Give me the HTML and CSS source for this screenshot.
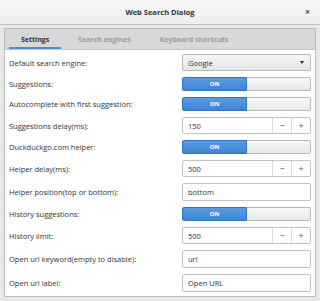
FILE: index.html
```html
<!DOCTYPE html>
<html lang="en">
<head>
  <meta charset="UTF-8">
  <title>Web Search Dialog</title>
  <link rel="stylesheet" href="styles.css">
</head>
<body>
  <div class="window">
    <div class="titlebar">
      <div class="title">Web Search Dialog</div>
      <div class="close">&#x2715;</div>
    </div>
    <div class="window-body">
      <div class="notebook">
        <div class="tabs">
          <div class="tab active">Settings</div>
          <div class="tab">Search engines</div>
          <div class="tab">Keyboard shortcuts</div>
        </div>
        <div class="page">
          <div class="row">
            <div class="label">Default search engine:</div>
            <div class="combo"><span>Google</span><span class="arrow"></span></div>
          </div>
          <div class="row">
            <div class="label">Suggestions:</div>
            <div class="switch"><div class="on">ON</div><div class="off"></div></div>
          </div>
          <div class="row">
            <div class="label">Autocomplete with first suggestion:</div>
            <div class="switch"><div class="on">ON</div><div class="off"></div></div>
          </div>
          <div class="row">
            <div class="label">Suggestions delay(ms):</div>
            <div class="spin"><div class="value">150</div><div class="btn">&minus;</div><div class="btn">+</div></div>
          </div>
          <div class="row">
            <div class="label">Duckduckgo.com helper:</div>
            <div class="switch"><div class="on">ON</div><div class="off"></div></div>
          </div>
          <div class="row">
            <div class="label">Helper delay(ms):</div>
            <div class="spin"><div class="value">500</div><div class="btn">&minus;</div><div class="btn">+</div></div>
          </div>
          <div class="row">
            <div class="label">Helper position(top or bottom):</div>
            <div class="entry">bottom</div>
          </div>
          <div class="row">
            <div class="label">History suggestions:</div>
            <div class="switch"><div class="on">ON</div><div class="off"></div></div>
          </div>
          <div class="row">
            <div class="label">History limit:</div>
            <div class="spin"><div class="value">500</div><div class="btn">&minus;</div><div class="btn">+</div></div>
          </div>
          <div class="row">
            <div class="label">Open url keyword(empty to disable):</div>
            <div class="entry">url</div>
          </div>
          <div class="row">
            <div class="label">Open url label:</div>
            <div class="entry">Open URL</div>
          </div>
        </div>
      </div>
    </div>
  </div>
</body>
</html>
```

FILE: styles.css
```css
body {
  margin: 0;
  font-family: "Open Sans", "Noto Sans", sans-serif;
  font-size: 7.5px;
  color: #2e3436;
  background: #e8e8e8;
}
.window {
  width: 320px;
  height: 301px;
  background: #e8e8e8;
}
.titlebar {
  height: 25px;
  display: flex;
  align-items: center;
  justify-content: center;
  position: relative;
  background: linear-gradient(#f6f6f6, #eeeeee);
  border-bottom: 1px solid #c4c4c4;
  box-sizing: border-box;
}
.title {
  font-weight: bold;
  font-size: 7.5px;
  padding-bottom: 1px;
}
.close {
  position: absolute;
  right: 10px;
  top: 8px;
  font-size: 6px;
  font-weight: bold;
}
.window-body {
  padding: 3px 4px 4px 4px;
}
.notebook {
  border: 1px solid #bcbcbc;
  background: #fff;
}
.tabs {
  display: flex;
  height: 20px;
  background: #d8d8d8;
  border-bottom: 1px solid #c4c4c4;
  padding-left: 4px;
  gap: 5px;
}
.tab {
  padding: 0 12px;
  display: flex;
  align-items: center;
  color: #9a9c9c;
  font-weight: bold;
  font-size: 7px;
  box-sizing: border-box;
}
.tab.active {
  color: #2e3436;
  border-bottom: 2px solid #4a90d9;
  padding-top: 2px;
}
.page {
  display: flex;
  flex-direction: column;
  gap: 6px;
  padding: 4px 4px 4px 4px;
}
.row {
  display: grid;
  grid-template-columns: 1fr 129px;
  align-items: center;
}
.combo {
  height: 17px;
  box-sizing: border-box;
  border: 1px solid #b8b8b8;
  border-radius: 2px;
  background: linear-gradient(#f6f6f6, #e6e6e6);
  display: flex;
  align-items: center;
  justify-content: space-between;
  padding: 0 6px 0 5px;
}
.arrow {
  width: 0;
  height: 0;
  border-left: 2.5px solid transparent;
  border-right: 2.5px solid transparent;
  border-top: 3px solid #2e3436;
}
.switch {
  height: 14px;
  display: flex;
  box-sizing: border-box;
}
.switch .on {
  width: 65px;
  background: linear-gradient(#5a9ae0, #3d86d4);
  border: 1px solid #2f74c0;
  border-radius: 2px 0 0 2px;
  color: #fff;
  font-size: 6px;
  font-weight: bold;
  display: flex;
  align-items: center;
  justify-content: center;
  box-sizing: border-box;
}
.switch .off {
  flex: 1;
  background: linear-gradient(#f8f8f8, #e8e8e8);
  border: 1px solid #b8b8b8;
  border-left: none;
  border-radius: 0 2px 2px 0;
}
.spin, .entry {
  height: 17px;
  box-sizing: border-box;
  border: 1px solid #c2c2c2;
  border-radius: 2px;
  background: #fff;
  display: flex;
  align-items: center;
}
.entry {
  height: 18px;
  padding-left: 5px;
}
.spin .value {
  flex: 1;
  padding-left: 5px;
}
.spin .btn {
  width: 18px;
  height: 100%;
  border-left: 1px solid #dadada;
  display: flex;
  align-items: center;
  justify-content: center;
  font-size: 9px;
  color: #555;
}
```
